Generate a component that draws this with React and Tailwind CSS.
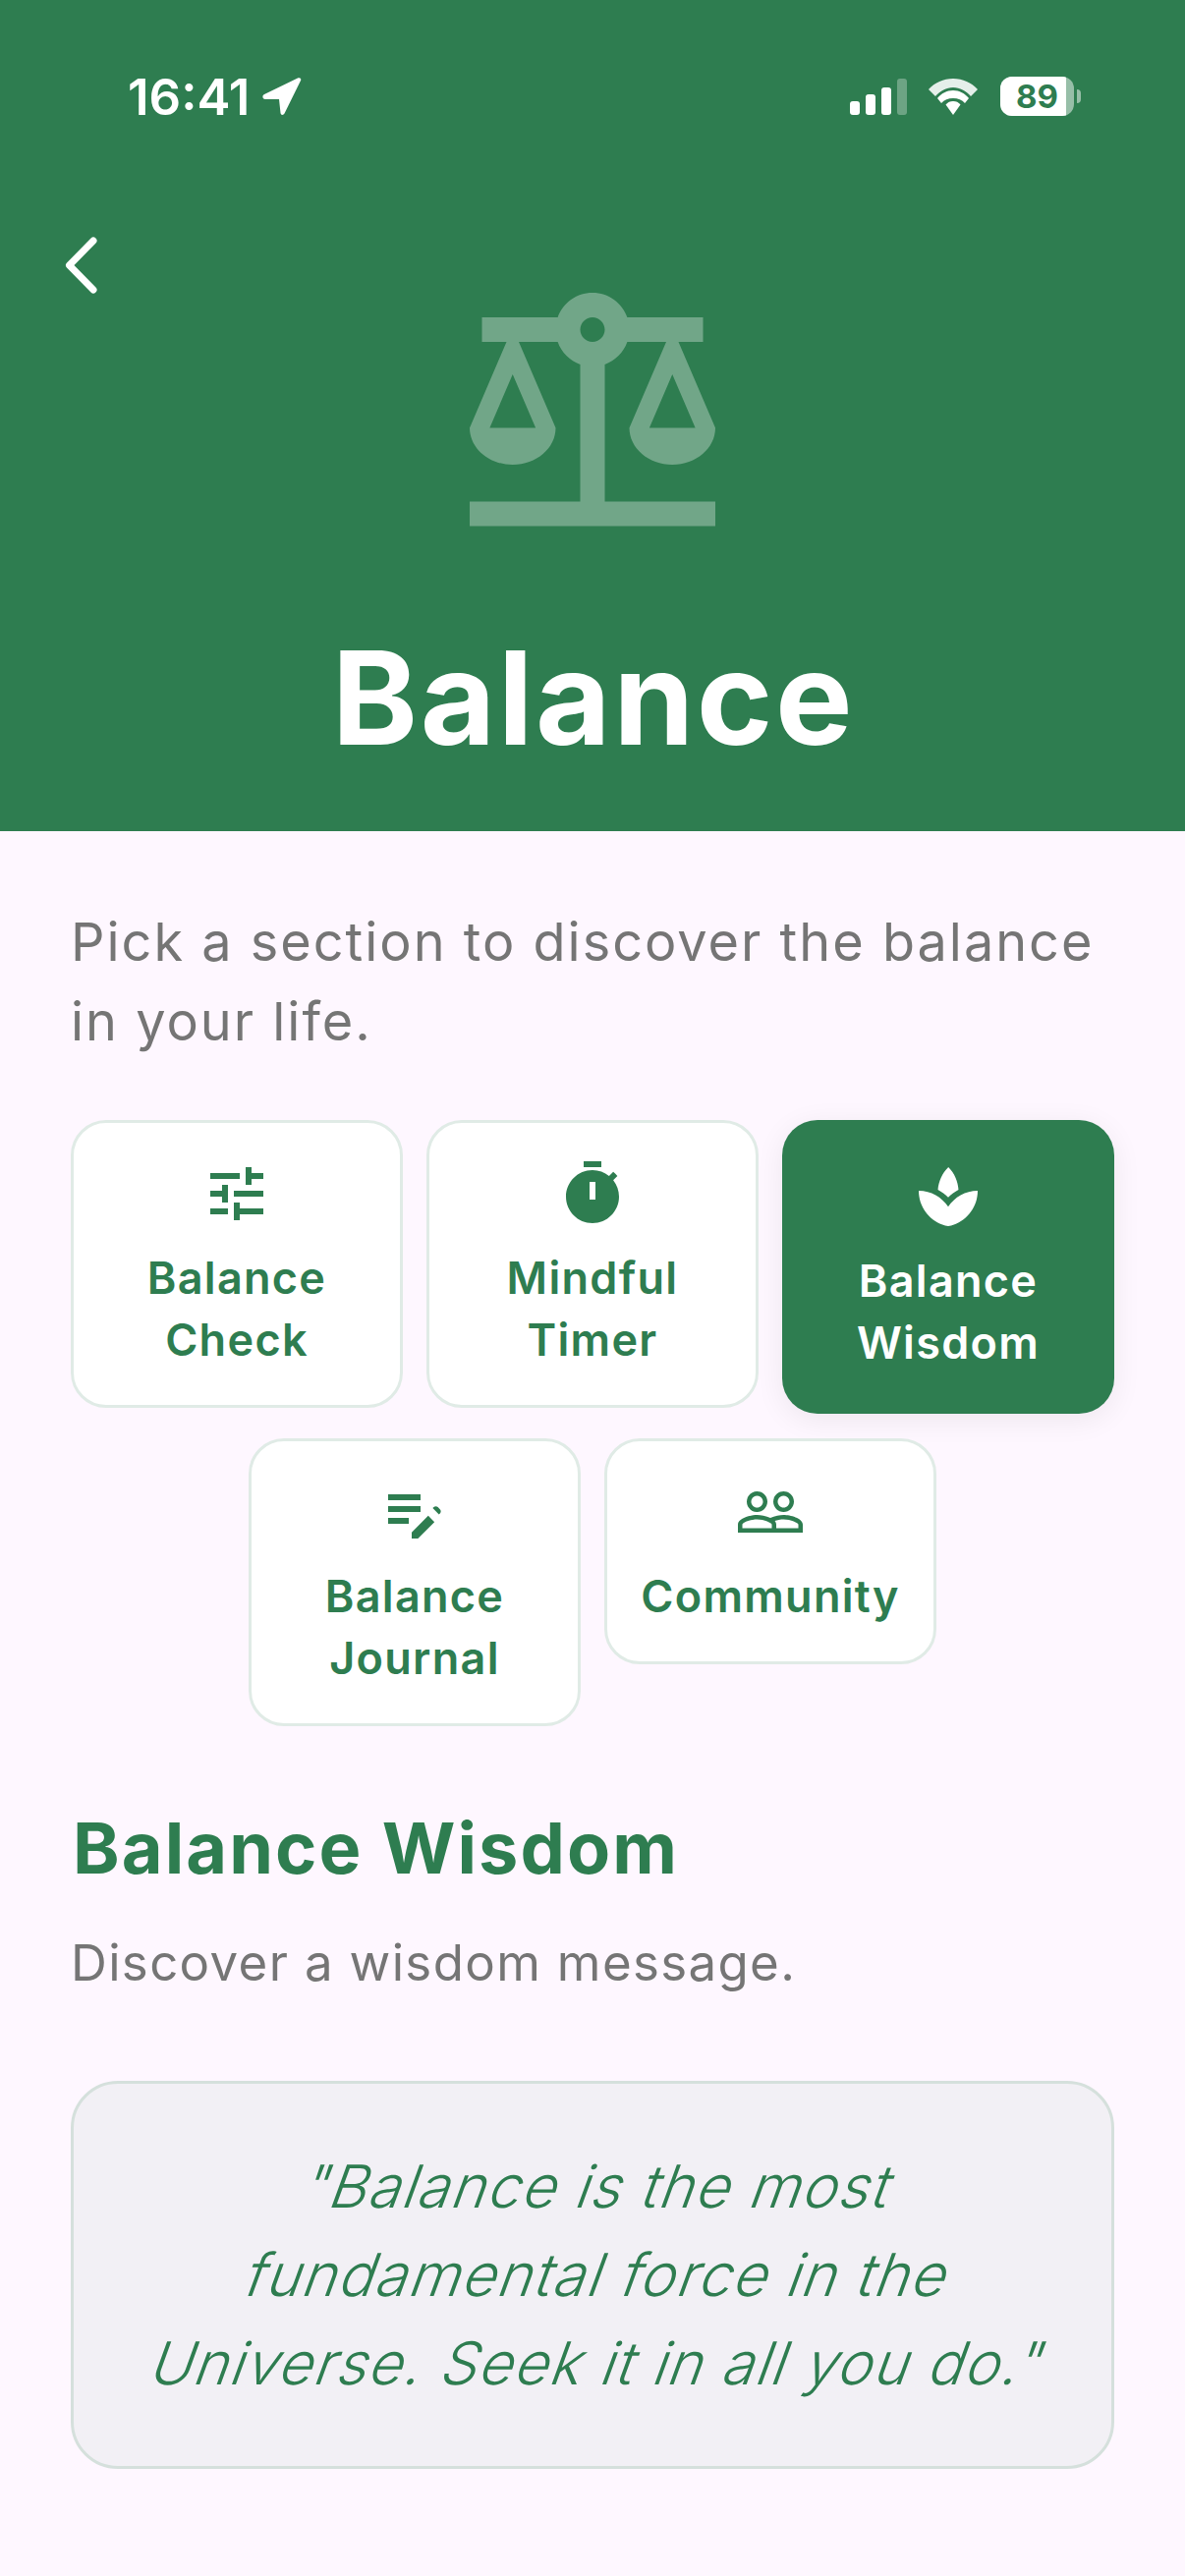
import React from 'react';

const sections = [
  { id: 'check', label: ['Balance', 'Check'], icon: 'M3 17v2h6v-2H3zM3 5v2h10V5H3zm10 16v-2h8v-2h-8v-2h-2v6h2zM7 9v2H3v2h4v2h2V9H7zm14 4v-2H11v2h10zm-6-4h2V7h4V5h-4V3h-2v6z' },
  { id: 'timer', label: ['Mindful', 'Timer'], icon: 'M15 1H9v2h6V1zm-4 13h2V8h-2v6zm8.03-6.61l1.42-1.42c-.43-.51-.9-.99-1.41-1.41l-1.42 1.42C16.07 4.74 14.12 4 12 4c-4.97 0-9 4.03-9 9s4.02 9 9 9 9-4.03 9-9c0-2.12-.74-4.07-1.97-5.61z' },
  { id: 'wisdom', label: ['Balance', 'Wisdom'], active: true, icon: 'M15.49 9.63c-.18-2.79-1.31-5.51-3.43-7.63-2.14 2.14-3.32 4.86-3.55 7.63 1.28.68 2.46 1.56 3.49 2.63 1.03-1.06 2.21-1.94 3.49-2.63zM12 15.45C9.85 12.17 6.18 10 2 10c0 5.32 3.36 9.82 8.03 11.49.63.23 1.29.4 1.97.51.68-.12 1.33-.29 1.97-.51C18.64 19.82 22 15.32 22 10c-4.18 0-7.85 2.17-10 5.45z' },
  { id: 'journal', label: ['Balance', 'Journal'], icon: 'M3 10h11v2H3zM3 6h11v2H3zM3 14h7v2H3zM20.59 11.05l-.71-.71c-.39-.39-1.02-.39-1.41 0l-.34.34 2.12 2.12.34-.34c.39-.39.39-1.02 0-1.41zM11 18.88V21h2.12l5.6-5.6-2.12-2.12z' },
  { id: 'community', label: ['Community'], icon: 'M16.5 13c-1.2 0-3.07.34-4.5 1-1.43-.67-3.3-1-4.5-1C5.33 13 1 14.08 1 16.25V19h22v-2.75c0-2.17-4.33-3.25-6.5-3.25zm-4 4.5h-10v-1.25c0-.54 2.56-1.75 5-1.75s5 1.21 5 1.75v1.25zm9 0H14v-1.25c0-.46-.2-.86-.52-1.22.88-.3 1.96-.53 3.02-.53 2.44 0 5 1.21 5 1.75v1.25zM7.5 12c1.93 0 3.5-1.57 3.5-3.5S9.43 5 7.5 5 4 6.57 4 8.5 5.57 12 7.5 12zm0-5.5c1.1 0 2 .9 2 2s-.9 2-2 2-2-.9-2-2 .9-2 2-2zm9 5.5c1.93 0 3.5-1.57 3.5-3.5S18.43 5 16.5 5 13 6.57 13 8.5s1.57 3.5 3.5 3.5zm0-5.5c1.1 0 2 .9 2 2s-.9 2-2 2-2-.9-2-2 .9-2 2-2z' },
];

const quoteLines = ['"Balance is the most', 'fundamental force in the', 'Universe. Seek it in all you do."'];

const StatusBar = () => (
  <div className="flex h-[38px] items-center justify-between pl-[130px] pr-[106px] text-white">
    <div className="flex items-center gap-[13px]">
      <span className="text-[51px] leading-none font-semibold">16:41</span>
      <svg viewBox="0 0 40 38" className="h-[38px] w-[40px]" fill="currentColor">
        <path d="M36 .5 2 17c-2.500 1.200-2 5 1 5h14l1.500 14c.3 2.500 3 2.500 4 .5L39 3c1-2-.8-3.500-3-2.500z" />
      </svg>
    </div>
    <div className="flex items-center">
      <div className="flex h-[37px] items-end gap-[6px]">
        <span className="h-[14px] w-[10px] rounded-[3px] bg-white" />
        <span className="h-[21px] w-[10px] rounded-[3px] bg-white" />
        <span className="h-[28px] w-[10px] rounded-[3px] bg-white" />
        <span className="h-[37px] w-[10px] rounded-[3px] bg-white/30" />
      </div>
      <svg viewBox="0 0 50 37" className="ml-[22px] h-[37px] w-[50px]" fill="white">
        <path opacity="0.88" d="M25 0C15 0 6.500 4 0 11l7 7c5-5.500 11-9 18-9s13 3.500 18 9l7-7C43.500 4 35 0 25 0z" />
        <path d="M25 12c-6.500 0-12 3-16 8l4 5c3-3.300 7-5 12-5s9 1.700 12 5l4-5c-4-5-9.500-8-16-8z" />
        <path d="M25 23c-3 0-5.500 1-7.500 3.500L25 37l7.500-10.500C30.500 24 28 23 25 23z" />
      </svg>
      <div className="relative ml-[23px] flex h-[40px] w-[75px] items-center justify-center overflow-hidden rounded-[12px] bg-white/50">
        <div className="absolute inset-y-0 left-0 w-[67px] bg-white" />
        <span className="relative text-[33px] leading-none font-bold text-[#2E7D50]">89</span>
      </div>
      <span className="ml-[3px] h-[14px] w-[4px] rounded-r-full bg-white/50" />
    </div>
  </div>
);

const SectionCard = ({ section }) => (
  <div
    className={`flex w-[338px] flex-col items-center rounded-[36px] text-center ${
      section.active
        ? 'bg-[#2E7D50] px-[36px] pt-[42px] pb-[41px] text-white shadow-[0_6px_30px_rgba(0,0,0,0.07)]'
        : 'border-[3px] border-[#E0EBE6] bg-white px-[33px] pt-[36px] pb-[35px] text-[#2E7D50]'
    }`}
  >
    <svg viewBox="0 0 24 24" className="h-[72px] w-[72px]" fill="currentColor" fillRule="evenodd">
      <path d={section.icon} />
    </svg>
    <div className="mt-[18px] text-[45px] leading-[63px] font-semibold tracking-[1.3px]">
      {section.label.map((line) => (
        <div key={line}>{line}</div>
      ))}
    </div>
  </div>
);

export default function App() {
  return (
    <div className="relative min-h-[2622px] bg-[#FEF7FF] font-['Inter',sans-serif]">
      <header className="flex h-[846px] flex-col bg-[#2E7D50] pt-[79px]">
        <StatusBar />
        <svg viewBox="0 0 24 24" className="mx-auto mt-[156px] h-[300px] w-[300px]" fill="#ffffff" fillOpacity="0.32" fillRule="evenodd">
          <path d="M13 7.830c.85-.3 1.530-.98 1.830-1.830H18l-3 7c0 1.660 1.570 3 3.500 3s3.500-1.340 3.500-3l-3-7h2V4h-6.170c-.41-1.170-1.520-2-2.830-2s-2.420.83-2.830 2H3v2h2l-3 7c0 1.660 1.570 3 3.500 3S9 14.660 9 13L6 6h3.170c.3.85.98 1.530 1.830 1.830V19H2v2h20v-2h-9V7.830zM20.370 13h-3.740l1.870-4.360L20.370 13zm-13 0H3.630L5.500 8.640 7.370 13zM12 6c-.55 0-1-.45-1-1s.45-1 1-1 1 .45 1 1-.45 1-1 1z" />
        </svg>
        <h1 className="mt-[57px] pl-[2px] text-center text-[132px] leading-[160px] font-bold tracking-[2.5px] text-white">Balance</h1>
      </header>

      <button className="absolute top-[240px] left-[60px] text-white">
        <svg viewBox="0 0 48 60" className="h-[60px] w-[48px]" fill="none" stroke="currentColor" strokeWidth="7" strokeLinecap="round" strokeLinejoin="round">
          <path d="M35 5 10.500 30 35 55" />
        </svg>
      </button>

      <main className="px-[72px] pt-[72px]">
        <p className="text-[54px] leading-[81px] tracking-[2px] text-[#757575]">Pick a section to discover the balance in your life.</p>

        <div className="mt-[60px] flex flex-wrap items-start justify-center gap-x-[24px] gap-y-[25px]">
          {sections.map((section) => (
            <SectionCard key={section.id} section={section} />
          ))}
        </div>

        <h2 className="mt-[76px] ml-[2px] text-[72px] leading-[96px] font-bold tracking-[2.1px] text-[#2E7D50]">Balance Wisdom</h2>
        <p className="mt-[33px] text-[51px] leading-[72px] tracking-[1.35px] text-[#757575]">Discover a wisdom message.</p>

        <div className="mt-[84px] rounded-[48px] border-[3px] border-[#D5E0DC] bg-[#F2F0F5] px-[50px] pt-[59px] pb-[60px] text-center text-[60px] leading-[90px] font-[340] tracking-[1.45px] text-[#2E7D50]">
          {quoteLines.map((line) => (
            <div key={line} className="origin-[50%_74%] -skew-x-[20deg]">{line}</div>
          ))}
        </div>
      </main>
    </div>
  );
}
